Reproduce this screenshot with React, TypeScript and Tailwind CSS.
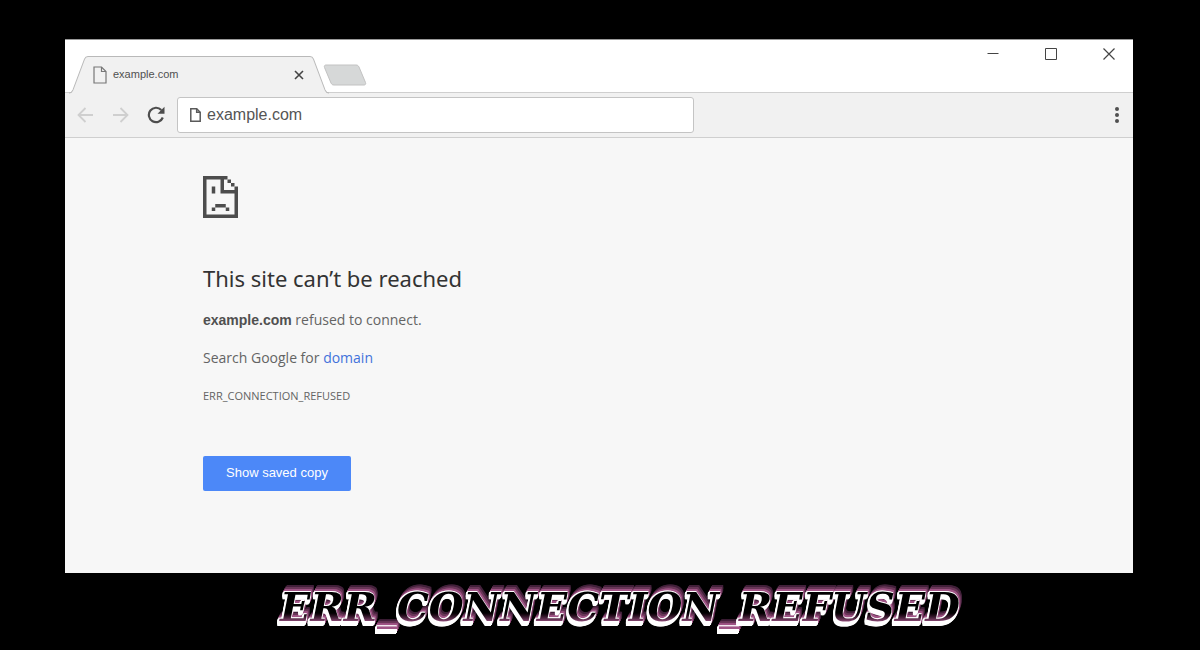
import type { ReactNode, SVGProps } from 'react'

const host = 'example.com'
const errorCode = 'ERR_CONNECTION_REFUSED'

const PageIcon = ({ strokeWidth = 1, ...props }: SVGProps<SVGSVGElement>) => (
  <svg viewBox="0 0 14 18" fill="none" stroke="currentColor" strokeWidth={strokeWidth} {...props}>
    <path d="M1 1h7.5L13 5.5V17H1z" />
    <path d="M8.5 1v4.5H13" />
  </svg>
)

const SadPageIcon = () => (
  <svg viewBox="0 0 20 24" className="h-[42px] w-[35px] text-[#4d4d4d]" fill="currentColor">
    <path d="M0 0h14v2H2v20h16V10h-8V2h2v6h6V6h2v18H0z" />
    <path d="M14 2h2v2h-2zM16 4h2v2h-2z" />
    <path d="M5 6h2v4H5zM7 16h6v2H7zM5 18h2v2H5zM13 18h2v2h-2z" />
  </svg>
)

const IconButton = ({
  label,
  className = '',
  children
}: {
  label: string
  className?: string
  children: ReactNode
}) => (
  <button type="button" aria-label={label} className={`flex items-center justify-center ${className}`}>
    {children}
  </button>
)

const Tab = () => (
  <div className="relative z-10 -mb-px ml-1 mt-4 flex h-[37px] w-[260px] items-center pl-6 pr-[22px]">
    <svg viewBox="0 0 260 37" preserveAspectRatio="none" className="absolute inset-0 h-[38px] w-full">
      <path
        d="M0 37c2 0 3-1.300 4-3.500L15.500 3c.8-1.900 1.500-2.500 3.500-2.500h222c2 0 2.700.6 3.500 2.500L256 33.500c1 2.200 2 3.500 4 3.500z"
        fill="#f1f1f1"
      />
      <path
        d="M0 36c2 0 3-.8 4-3L15.500 3c.8-1.900 1.500-2.500 3.500-2.500h222c2 0 2.700.6 3.500 2.500L256 33c1 2.200 2 3 4 3"
        fill="none"
        stroke="#b9b9b9"
      />
    </svg>
    <PageIcon className="relative h-[18px] w-[14px] text-[#777]" strokeWidth={1.2} />
    <span className="relative ml-1.5 flex-1 font-['Liberation_Sans',sans-serif] text-[11px] text-[#505050]">
      {host}
    </span>
    <IconButton label="Close tab" className="relative size-4 text-[#444]">
      <svg viewBox="0 0 10 10" className="size-2.5" stroke="currentColor" strokeWidth="1.600">
        <path d="M1 1l8 8M9 1L1 9" />
      </svg>
    </IconButton>
  </div>
)

const TitleBar = () => (
  <div className="flex items-start border-t border-[#999] bg-white">
    <Tab />
    <button type="button" aria-label="New tab" className="-ml-1.5 mt-6">
      <svg viewBox="0 0 44 22" className="h-[22px] w-11">
        <path
          d="M3 1h30c1.500 0 2.300.6 3 2l6.500 15.500c.5 1.400.1 2.500-1.500 2.500H11c-1.500 0-2.300-.6-3-2L1.500 3.500C1 2 1.500 1 3 1z"
          fill="#d6d8d8"
          stroke="#c2c2c2"
        />
      </svg>
    </button>
    <div className="ml-auto flex gap-[42px] pr-4 pt-1.5 text-[#444]">
      <IconButton label="Minimize" className="size-4">
        <svg viewBox="0 0 12 12" className="size-3" stroke="currentColor">
          <path d="M.5 5.500h11" />
        </svg>
      </IconButton>
      <IconButton label="Maximize" className="size-4">
        <svg viewBox="0 0 12 12" className="size-3" fill="none" stroke="currentColor">
          <path d="M.5.5h11v11H.5z" />
        </svg>
      </IconButton>
      <IconButton label="Close" className="size-4">
        <svg viewBox="0 0 12 12" className="size-3" stroke="currentColor" strokeWidth="1.200">
          <path d="M.5.5l11 11M11.500.5l-11 11" />
        </svg>
      </IconButton>
    </div>
  </div>
)

const Toolbar = () => (
  <div className="flex items-center border-b border-t border-[#cfcfcf] bg-[#f1f1f1] py-1 pl-3 pr-2">
    <IconButton label="Back" className="size-4 text-[#cfcfcf]">
      <svg viewBox="0 0 16 16" className="size-4" fill="none" stroke="currentColor" strokeWidth="1.800">
        <path d="M16 8H1.500M8.500 1L1.500 8l7 7" />
      </svg>
    </IconButton>
    <IconButton label="Forward" className="ml-5 size-4 text-[#cfcfcf]">
      <svg viewBox="0 0 16 16" className="size-4" fill="none" stroke="currentColor" strokeWidth="1.800">
        <path d="M0 8h14.500M7.500 1l7 7-7 7" />
      </svg>
    </IconButton>
    <IconButton label="Reload" className="ml-[18px] size-[18px] text-[#4d4d4d]">
      <svg viewBox="0 0 18 18" className="size-[18px]" fill="none" stroke="currentColor" strokeWidth="2.200">
        <path d="M15.800 11.500A7.200 7.200 0 1 1 14.300 4" />
        <path d="M17.500.8v7h-7z" fill="currentColor" stroke="none" />
      </svg>
    </IconButton>
    <label className="ml-3 flex h-9 w-[517px] items-center rounded-[3px] border border-[#c4c4c4] bg-white pl-3">
      <PageIcon className="h-4 w-[11px] text-[#5a5a5a]" strokeWidth={1.9} />
      <input
        type="text"
        aria-label="Address"
        defaultValue={host}
        className="ml-1.5 min-w-0 flex-1 font-['Liberation_Sans',sans-serif] text-base text-[#555] outline-none"
      />
    </label>
    <IconButton label="Menu" className="ml-auto h-5 w-4 text-[#505050]">
      <svg viewBox="0 0 4 18" className="h-[18px] w-1" fill="currentColor">
        <circle cx="2" cy="3" r="2" />
        <circle cx="2" cy="9" r="2" />
        <circle cx="2" cy="15" r="2" />
      </svg>
    </IconButton>
  </div>
)

const ErrorPage = () => (
  <main className="bg-[#f7f7f7] pb-[82px] pl-[138px] pr-8 pt-[38px] font-['Open_Sans',sans-serif] text-sm text-[#646464]">
    <SadPageIcon />
    <h1 className="mt-[42px] font-['Noto_Sans',sans-serif] text-[22px] leading-9 text-[#333]">
      This site can’t be reached
    </h1>
    <p className="mt-3.5 leading-5">
      <strong className="font-['Liberation_Sans',sans-serif] text-[#505050]">{host}</strong> refused to connect.
    </p>
    <p className="mt-[18px] leading-5">
      Search Google for{' '}
      <a href="#domain" className="text-[#4272db]">
        domain
      </a>
    </p>
    <p className="mt-[18px] text-[11px] leading-5">{errorCode}</p>
    <button
      type="button"
      className="mt-[50px] h-[35px] rounded-[2px] bg-[#4c88f8] px-[23px] font-['Liberation_Sans',sans-serif] text-[13px] text-white"
    >
      Show saved copy
    </button>
  </main>
)

const App = () => (
  <div className="min-h-screen overflow-hidden bg-black pt-[39px]">
    <div className="ml-[65px] mr-[67px]">
      <TitleBar />
      <Toolbar />
      <ErrorPage />
    </div>
    <h2 className="mt-3 bg-linear-to-b from-black from-60% to-[#a05486] to-85% bg-clip-text pl-10 text-center font-['DejaVu_Serif',serif] text-[40px] font-bold italic leading-[44px] text-transparent [filter:drop-shadow(-1px_0_0_white)_drop-shadow(0_-1px_0_white)_drop-shadow(-1px_1px_0_white)_drop-shadow(0_2px_0_white)_drop-shadow(0_2px_0_white)_drop-shadow(1px_-2px_0_#a05486)_drop-shadow(1px_-2px_0_#6a3658)_drop-shadow(1px_-2px_0_#42203a)]">
      {errorCode}
    </h2>
  </div>
)

export default App
